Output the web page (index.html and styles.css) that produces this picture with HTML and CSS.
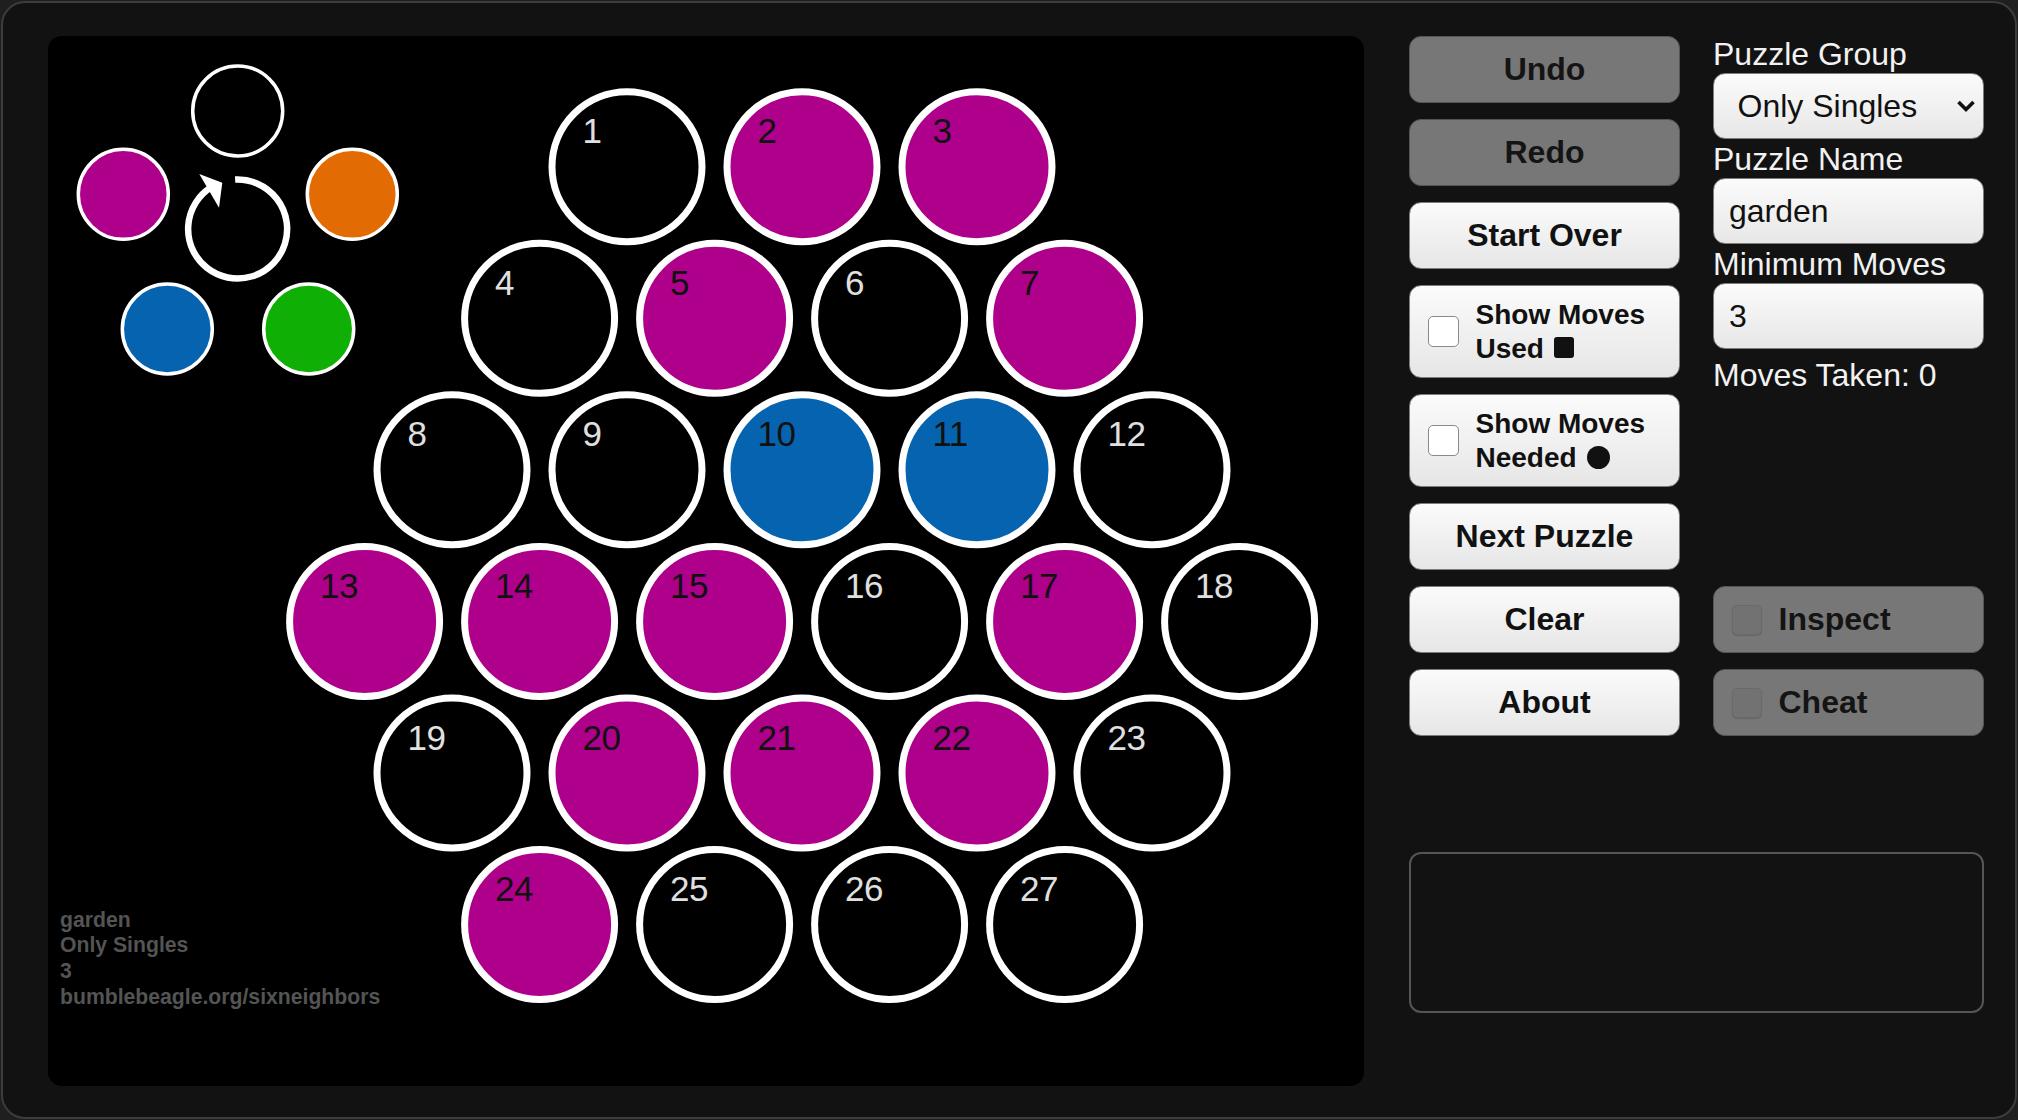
FILE: index.html
```html
<!DOCTYPE html>
<html lang="en">
<head>
<meta charset="utf-8">
<title>Six Neighbors</title>
<link rel="stylesheet" href="styles.css">
</head>
<body>
<div class="window">
  <div class="board">
    <svg class="board-svg" viewBox="48 36 1316 1050" width="1316" height="1050" xmlns="http://www.w3.org/2000/svg">
      <!-- colour palette -->
      <circle class="pal k" cx="237.7" cy="111" r="45"/>
      <circle class="pal m" cx="123.3" cy="194.3" r="45"/>
      <circle class="pal o" cx="352.3" cy="194.3" r="45"/>
      <circle class="pal b" cx="167.3" cy="329" r="45"/>
      <circle class="pal g" cx="308.7" cy="329" r="45"/>
      <path class="rot" d="M235.1 179.6 A49.5 49.5 0 1 1 211.5 187"/>
      <polygon class="rot-head" points="199.3,174 222.3,182.7 219,207.7"/>

      <!-- row 0 -->
      <circle class="cell k" cx="627" cy="166.7" r="75"/><text class="num light" x="582.5" y="143">1</text>
      <circle class="cell m" cx="802" cy="166.7" r="75"/><text class="num dark" x="757.5" y="143">2</text>
      <circle class="cell m" cx="977" cy="166.7" r="75"/><text class="num dark" x="932.5" y="143">3</text>
      <!-- row 1 -->
      <circle class="cell k" cx="539.6" cy="318.3" r="75"/><text class="num light" x="495.1" y="294.8">4</text>
      <circle class="cell m" cx="714.6" cy="318.3" r="75"/><text class="num dark" x="670.1" y="294.8">5</text>
      <circle class="cell k" cx="889.6" cy="318.3" r="75"/><text class="num light" x="845.1" y="294.8">6</text>
      <circle class="cell m" cx="1064.6" cy="318.3" r="75"/><text class="num dark" x="1020.1" y="294.8">7</text>
      <!-- row 2 -->
      <circle class="cell k" cx="452" cy="469.8" r="75"/><text class="num light" x="407.5" y="446.3">8</text>
      <circle class="cell k" cx="627" cy="469.8" r="75"/><text class="num light" x="582.5" y="446.3">9</text>
      <circle class="cell b" cx="802" cy="469.8" r="75"/><text class="num dark" x="757.5" y="446.3">10</text>
      <circle class="cell b" cx="977" cy="469.8" r="75"/><text class="num dark" x="932.5" y="446.3">11</text>
      <circle class="cell k" cx="1152" cy="469.8" r="75"/><text class="num light" x="1107.5" y="446.3">12</text>
      <!-- row 3 -->
      <circle class="cell m" cx="364.6" cy="621.4" r="75"/><text class="num dark" x="320.1" y="597.9">13</text>
      <circle class="cell m" cx="539.6" cy="621.4" r="75"/><text class="num dark" x="495.1" y="597.9">14</text>
      <circle class="cell m" cx="714.6" cy="621.4" r="75"/><text class="num dark" x="670.1" y="597.9">15</text>
      <circle class="cell k" cx="889.6" cy="621.4" r="75"/><text class="num light" x="845.1" y="597.9">16</text>
      <circle class="cell m" cx="1064.6" cy="621.4" r="75"/><text class="num dark" x="1020.1" y="597.9">17</text>
      <circle class="cell k" cx="1239.6" cy="621.4" r="75"/><text class="num light" x="1195.1" y="597.9">18</text>
      <!-- row 4 -->
      <circle class="cell k" cx="452" cy="773" r="75"/><text class="num light" x="407.5" y="749.5">19</text>
      <circle class="cell m" cx="627" cy="773" r="75"/><text class="num dark" x="582.5" y="749.5">20</text>
      <circle class="cell m" cx="802" cy="773" r="75"/><text class="num dark" x="757.5" y="749.5">21</text>
      <circle class="cell m" cx="977" cy="773" r="75"/><text class="num dark" x="932.5" y="749.5">22</text>
      <circle class="cell k" cx="1152" cy="773" r="75"/><text class="num light" x="1107.5" y="749.5">23</text>
      <!-- row 5 -->
      <circle class="cell m" cx="539.6" cy="924.5" r="75"/><text class="num dark" x="495.1" y="901">24</text>
      <circle class="cell k" cx="714.6" cy="924.5" r="75"/><text class="num light" x="670.1" y="901">25</text>
      <circle class="cell k" cx="889.6" cy="924.5" r="75"/><text class="num light" x="845.1" y="901">26</text>
      <circle class="cell k" cx="1064.6" cy="924.5" r="75"/><text class="num light" x="1020.1" y="901">27</text>

      <!-- caption -->
      <text class="foot" x="60" y="926.7">garden</text>
      <text class="foot" x="60" y="952.3">Only Singles</text>
      <text class="foot" x="60" y="977.9">3</text>
      <text class="foot" x="60" y="1003.5">bumblebeagle.org/sixneighbors</text>
    </svg>
  </div>

  <div class="side">
    <div class="controls">
      <button class="btn disabled">Undo</button>
      <button class="btn disabled">Redo</button>
      <button class="btn">Start Over</button>
      <label class="btn check tall"><input type="checkbox" class="box"><span class="check-text">Show Moves<br>Used <span class="sq"></span></span></label>
      <label class="btn check tall"><input type="checkbox" class="box"><span class="check-text">Show Moves<br>Needed <span class="dot"></span></span></label>
      <button class="btn">Next Puzzle</button>
      <button class="btn">Clear</button>
      <button class="btn">About</button>

      <div class="info">
        <div class="lbl">Puzzle Group</div>
        <div class="select-wrap">
          <select class="field select">
            <option>Only Singles</option>
          </select>
          <svg class="chev" width="20" height="14" viewBox="0 0 20 14" xmlns="http://www.w3.org/2000/svg"><polyline points="2.5,3 10,10.5 17.5,3"/></svg>
        </div>
        <div class="lbl">Puzzle Name</div>
        <input class="field" type="text" value="garden">
        <div class="lbl">Minimum Moves</div>
        <input class="field" type="text" value="3">
        <div class="lbl taken">Moves Taken: 0</div>
      </div>

      <label class="btn check disabled inspect"><input type="checkbox" class="box off" disabled><span class="check-text">Inspect</span></label>
      <label class="btn check disabled cheat"><input type="checkbox" class="box off" disabled><span class="check-text">Cheat</span></label>
    </div>
    <div class="message"></div>
  </div>
</div>
</body>
</html>
```

FILE: styles.css
```css
html, body {
  margin: 0;
  padding: 0;
}

body {
  width: 2018px;
  height: 1120px;
  overflow: hidden;
  background: #1f1f1f;
  font-family: "Liberation Sans", Arial, sans-serif;
}

.window {
  box-sizing: border-box;
  margin: 1px;
  width: 2016px;
  height: 1118px;
  border: 2px solid #3c3c3c;
  border-radius: 24px;
  background: #121212;
  display: flex;
  align-items: flex-start;
  gap: 45px;
  padding: 33px 0 0 45px;
}

/* ---------- board ---------- */
.board {
  flex: none;
  width: 1316px;
  height: 1050px;
  background: #000;
  border-radius: 14px;
  overflow: hidden;
}

.board-svg {
  display: block;
}

.cell {
  stroke: #fff;
  stroke-width: 7;
}

.pal {
  stroke: #fff;
  stroke-width: 3.5;
}

.k { fill: #000; }
.m { fill: #af008c; }
.b { fill: #0563af; }
.g { fill: #10af05; }
.o { fill: #e36b03; }

.rot {
  fill: none;
  stroke: #fff;
  stroke-width: 6.5;
}

.rot-head {
  fill: #fff;
}

.num {
  font-family: "Liberation Sans", Arial, sans-serif;
  font-size: 35px;
  letter-spacing: -0.5px;
}

.num.light { fill: #e0e0e0; }
.num.dark { fill: #111; }

.foot {
  font-family: "Liberation Sans", Arial, sans-serif;
  font-weight: 700;
  font-size: 21.2px;
  fill: #545454;
}

/* ---------- side panel ---------- */
.side {
  flex: none;
  width: 575px;
  display: flex;
  flex-direction: column;
}

.controls {
  display: grid;
  grid-template-columns: 271px 271px;
  grid-template-rows: 67px 67px 67px 93px 93px 67px 67px 67px;
  grid-auto-flow: column;
  column-gap: 33px;
  row-gap: 16px;
}

.btn {
  box-sizing: border-box;
  margin: 0;
  width: 271px;
  height: 100%;
  border: 1.5px solid #7c7c7c;
  border-radius: 12px;
  background: linear-gradient(#fbfbfb, #e6e6e6);
  color: #111;
  font-family: "Liberation Sans", Arial, sans-serif;
  font-weight: 700;
  font-size: 32px;
  display: flex;
  align-items: center;
  justify-content: center;
  padding: 0;
  cursor: default;
}

.btn.disabled {
  background: #777;
  border-color: #555;
  color: #141414;
}

.btn.check {
  justify-content: flex-start;
  padding-left: 17.5px;
  gap: 17px;
}

.check-text {
  font-size: 28px;
  line-height: 34px;
}

.inspect .check-text,
.cheat .check-text {
  font-size: 32px;
  line-height: 37px;
}

.box {
  appearance: none;
  -webkit-appearance: none;
  box-sizing: border-box;
  margin: 0;
  flex: none;
  width: 31px;
  height: 31px;
  border: 1.5px solid #8a8a8a;
  border-radius: 5px;
  background: #fff;
}

.box.off {
  width: 30px;
  height: 30px;
  background: #727272;
  border: 1px solid #6a6a6a;
  box-shadow: 0 1px 1px rgba(0, 0, 0, 0.15);
}

.sq {
  display: inline-block;
  width: 20px;
  height: 21px;
  margin-left: 2px;
  background: #111;
  border-radius: 3px;
  vertical-align: baseline;
}

.dot {
  display: inline-block;
  width: 23px;
  height: 23px;
  margin-left: 3px;
  background: #111;
  border-radius: 50%;
  vertical-align: -2px;
}

.info {
  grid-column: 2;
  grid-row: 1 / 6;
  display: flex;
  flex-direction: column;
}

.inspect {
  grid-column: 2;
  grid-row: 7;
}

.cheat {
  grid-column: 2;
  grid-row: 8;
}

.lbl {
  color: #f2f2f2;
  font-size: 32px;
  line-height: 37px;
  margin-top: 2px;
}

.lbl:first-child {
  margin-top: 0;
}

.lbl.taken {
  margin-top: 8px;
}

.field {
  box-sizing: border-box;
  width: 271px;
  height: 66px;
  margin: 0;
  padding: 0 0 0 15px;
  border: 1.5px solid #7c7c7c;
  border-radius: 12px;
  background: linear-gradient(#fbfbfb, #e7e7e7);
  color: #111;
  font-family: "Liberation Sans", Arial, sans-serif;
  font-size: 32px;
  outline: none;
}

.select-wrap {
  position: relative;
  width: 271px;
  height: 66px;
}

.select {
  appearance: none;
  -webkit-appearance: none;
  padding-left: 23.5px;
}

.chev {
  position: absolute;
  left: 243px;
  top: 26px;
  pointer-events: none;
}

.chev polyline {
  fill: none;
  stroke: #111;
  stroke-width: 3.6;
}

.message {
  box-sizing: border-box;
  margin-top: 116px;
  width: 575px;
  height: 161px;
  border: 2px solid #555;
  border-radius: 12px;
}
```
